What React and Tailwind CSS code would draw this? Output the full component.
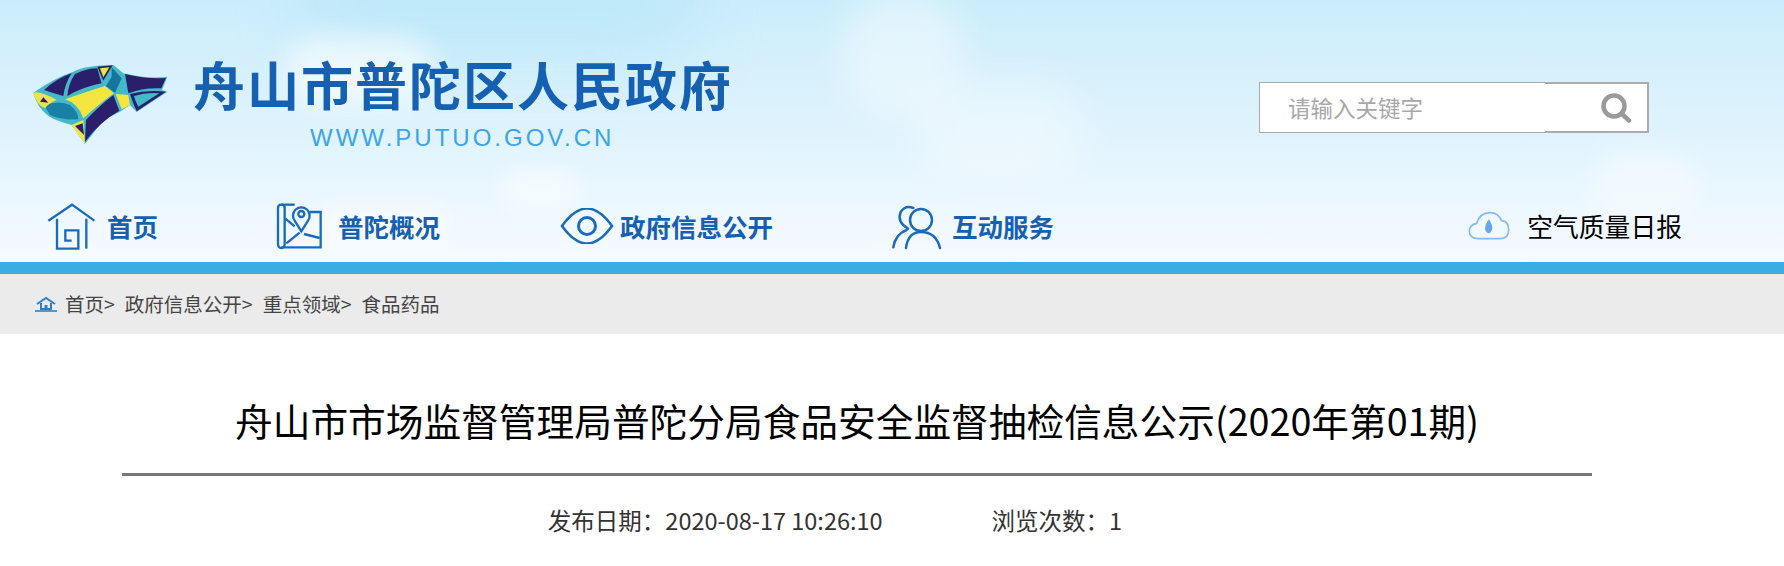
import React from "react";

const cjk = "font-['Noto_Sans_CJK_SC','Noto_Sans',sans-serif]";

const clouds = [
  "left-[285px] top-[36px] w-[150px] h-[70px] bg-white/60 blur-[14px]",
  "left-[840px] top-[-10px] w-[125px] h-[130px] bg-white/40 blur-[18px]",
  "left-[915px] top-[80px] w-[170px] h-[100px] bg-white/35 blur-[20px]",
  "left-[500px] top-[170px] w-[80px] h-[40px] bg-white/50 blur-[10px]",
  "left-[1590px] top-[150px] w-[110px] h-[70px] bg-white/40 blur-[14px]",
  "left-[320px] top-[205px] w-[130px] h-[40px] bg-white/50 blur-[12px]",
];

function FishLogo() {
  return (
    <svg viewBox="0 0 480 300" className="w-[160px] h-[100px] shrink-0">
      <path d="M40 128 Q100 85 160 65 Q200 45 280 45 L310 70 Q380 88 442 80 L426 120 L442 125 L350 186 L330 165 L300 185 L250 210 L195 282 L155 225 Q100 210 85 198 Q50 170 40 128Z" fill="#43b9c9" />
      <path d="M72 120 Q110 85 155 70 Q135 100 130 138 Q100 130 72 120Z" fill="#2b1f6b" />
      <path d="M165 72 Q200 55 232 55 Q240 85 245 100 Q190 110 142 138 Q145 100 165 72Z" fill="#2b1f6b" />
      <path d="M232 50 L278 46 L250 92Z" fill="#2b1f6b" />
      <path d="M240 55 L268 52 L250 82Z" fill="#f2e23f" />
      <path d="M275 52 L305 85 L285 128 L258 108 L275 80Z" fill="#14759f" />
      <path d="M135 148 Q200 125 255 108 L282 130 Q240 160 190 205 Q175 160 135 148Z" fill="#f4e63f" />
      <path d="M198 210 Q240 165 280 135 L298 182 Q240 215 195 275Z" fill="#2b1f6b" />
      <path d="M287 132 L325 135 L330 165 L305 178Z" fill="#f4e63f" />
      <path d="M72 165 Q120 150 150 165 Q175 185 175 208 Q120 210 90 195Z" fill="#1a7fa5" />
      <path d="M40 128 Q60 122 110 150 Q85 160 75 175 Q50 165 40 128Z" fill="#f0e24a" />
      <path d="M60 155 L70 142 L85 158Z" fill="#2b1f6b" />
      <path d="M155 225 L190 210 L195 282Z" fill="#f4e63f" />
      <path d="M165 228 L188 220 L192 255Z" fill="#2b1f6b" />
      <path d="M315 72 Q380 88 438 84 L424 115 Q370 112 325 130Z" fill="#2b1f6b" />
      <path d="M330 132 Q380 118 438 125 L350 184 Q338 158 330 132Z" fill="#2b1f6b" />
      <path d="M342 138 Q380 126 418 130 L355 170 Q346 155 342 138Z" fill="#43b9c9" />
    </svg>
  );
}

function HomeIcon() {
  return (
    <svg viewBox="0 0 180 168" className="w-[60px] h-[56px] ml-[-7px] mr-[-6px]" fill="none" stroke="#1a6cbb" strokeWidth="7">
      <path d="M22 68 L93 20 L160 68" />
      <path d="M48 62V152H112V97H73V128H92" />
      <path d="M136 62V152" />
    </svg>
  );
}

function MapIcon() {
  return (
    <svg viewBox="0 0 180 168" className="w-[60px] h-[56px] ml-[-10px] mr-[-5px]" fill="none" stroke="#1a6cbb" strokeWidth="7">
      <path d="M30 30 Q30 20 40 20 Q50 20 50 30 V138 Q50 150 40 150 Q30 150 30 138Z" />
      <path d="M40 20 H80" />
      <path d="M40 148 H158 V42 H125" />
      <path d="M100 100 L80 68 A25 25 0 1 1 120 68Z" />
      <circle cx="100" cy="48" r="9" />
      <path d="M52 62 L80 85" />
      <path d="M55 136 L95 104" />
      <path d="M108 108 L155 120" />
    </svg>
  );
}

function EyeIcon() {
  return (
    <svg viewBox="0 0 54 36" className="w-[54px] h-[36px]" fill="none" stroke="#1a6cbb" strokeWidth="2.6">
      <path d="M2 18 Q27 -17 52 18 Q27 53 2 18Z" />
      <circle cx="27" cy="18" r="8.5" strokeWidth="3" />
    </svg>
  );
}

function UsersIcon() {
  return (
    <svg viewBox="0 0 180 168" className="w-[60px] h-[56px] ml-[-7px] mr-[-7px]" fill="none" stroke="#1a6cbb" strokeWidth="7.5" strokeLinecap="round">
      <circle cx="105" cy="66" r="33" />
      <path d="M60 150 Q66 102 105 102 Q150 102 162 150" />
      <path d="M82 30 Q58 20 44 42 Q32 72 66 92" />
      <path d="M22 148 Q28 108 62 96" />
    </svg>
  );
}

function CloudIcon() {
  return (
    <svg viewBox="0 0 180 132" className="w-[60px] h-[44px] ml-[-9px] mr-[-11px]">
      <path d="M55 104 Q28 104 28 82 Q28 62 50 58 Q60 26 90 26 Q115 26 124 50 Q146 50 146 78 Q146 104 120 104Z" fill="none" stroke="#8ab9f7" strokeWidth="5" />
      <path d="M86 46 Q98 62 97 73 Q94 88 86 88 Q76 87 75 73 Q76 60 86 46Z" fill="#6aa5ef" />
    </svg>
  );
}

function SmallHome() {
  return (
    <svg viewBox="0 0 24 16" className="w-[24px] h-[16px] shrink-0 mr-[-3px]" fill="none" stroke="#2b80c8" strokeWidth="2">
      <path d="M3 8 L12 2 L21 8" />
      <path d="M7 7V13H17V7" />
      <path d="M12 13V9" strokeWidth="3" />
      <path d="M1 15H23" strokeWidth="1.6" />
    </svg>
  );
}

function SearchBox() {
  return (
    <div className={`flex w-[390px] h-[51px] mt-[32px] mr-[135px] ml-auto bg-white ${cjk}`}>
      <input
        readOnly
        placeholder="请输入关键字"
        className="w-[286px] h-full pl-[28px] pb-[2px] border border-[#ababab] border-r-0 bg-white text-[22.5px] placeholder:text-[#a8a8a8] outline-none"
      />
      <div className="flex-1 flex items-center justify-end pr-[15px] border-2 border-l-0 border-[#ababab]">
        <svg viewBox="0 0 32 32" className="w-[32px] h-[32px]" fill="none" stroke="#9a9a9a" strokeWidth="4.5" strokeLinecap="round">
          <circle cx="14" cy="14" r="10.5" />
          <path d="M22 22 L29 28.5" />
        </svg>
      </div>
    </div>
  );
}

function NavItem({ icon, label, gap }) {
  return (
    <a className={`flex items-center ${gap}`}>
      {icon}
      <span className="text-[25.5px] font-bold text-[#1560b0] whitespace-nowrap">{label}</span>
    </a>
  );
}

export default function App() {
  return (
    <div className={`w-full h-[566px] overflow-hidden bg-white ${cjk}`}>
      <header className="relative h-[262px] overflow-hidden bg-gradient-to-b from-[#cbedfb] via-[#dff3fd] to-[#f6fbff]">
        <div className="absolute left-[300px] top-[-60px] w-[400px] h-[120px] rounded-full bg-[#b6e6f8]/60 blur-[30px]" />
        {clouds.map((c) => (
          <div key={c} className={`absolute rounded-full ${c}`} />
        ))}

        <div className="relative flex pt-[50px] pl-[20px]">
          <FishLogo />
          <div className="ml-[13px] w-[560px]">
            <h1 className="text-[52px] leading-[64px] mt-[2px] font-bold tracking-[2px] text-[#1560b0] whitespace-nowrap">
              舟山市普陀区人民政府
            </h1>
            <p className="ml-[117px] mt-[9px] font-['Liberation_Sans',sans-serif] text-[24px] leading-[26px] tracking-[3px] text-[#3aa5e8]">
              WWW.PUTUO.GOV.CN
            </p>
          </div>
          <SearchBox />
        </div>

        <nav className="relative flex items-center mt-[52px] pl-[48px] pr-[102px] h-[46px]">
          <div className="flex items-center gap-[120px]">
            <NavItem icon={<HomeIcon />} label="首页" gap="gap-[12px]" />
            <NavItem icon={<MapIcon />} label="普陀概况" gap="gap-[15px]" />
            <NavItem icon={<EyeIcon />} label="政府信息公开" gap="gap-[6px]" />
            <NavItem icon={<UsersIcon />} label="互动服务" gap="gap-[13px]" />
          </div>
          <div className="ml-auto flex items-center gap-[18px]">
            <CloudIcon />
            <span className="text-[25.8px] text-black whitespace-nowrap">空气质量日报</span>
          </div>
        </nav>
      </header>

      <div className="h-[12px] bg-[#3bade2]" />

      <div className="h-[60px] bg-[#ebebeb] flex items-center gap-[10px] pl-[34px] text-[19.5px] text-[#444444]">
        <SmallHome />
        <span>首页&gt;</span>
        <span>政府信息公开&gt;</span>
        <span>重点领域&gt;</span>
        <span>食品药品</span>
      </div>

      <main className="ml-[122px] w-[1470px]">
        <h2 className="mt-[62px] h-[80px] pb-[28px] flex items-center justify-center border-b-[3px] border-[#777777] text-[37.7px] text-black whitespace-nowrap">
          舟山市市场监督管理局普陀分局食品安全监督抽检信息公示(2020年第01期)
        </h2>
        <div className="flex justify-center gap-[109px] pr-[44px] mt-[27px] text-[23.5px] text-[#333333]">
          <span>发布日期：2020-08-17 10:26:10</span>
          <span>浏览次数：1</span>
        </div>
      </main>
    </div>
  );
}
